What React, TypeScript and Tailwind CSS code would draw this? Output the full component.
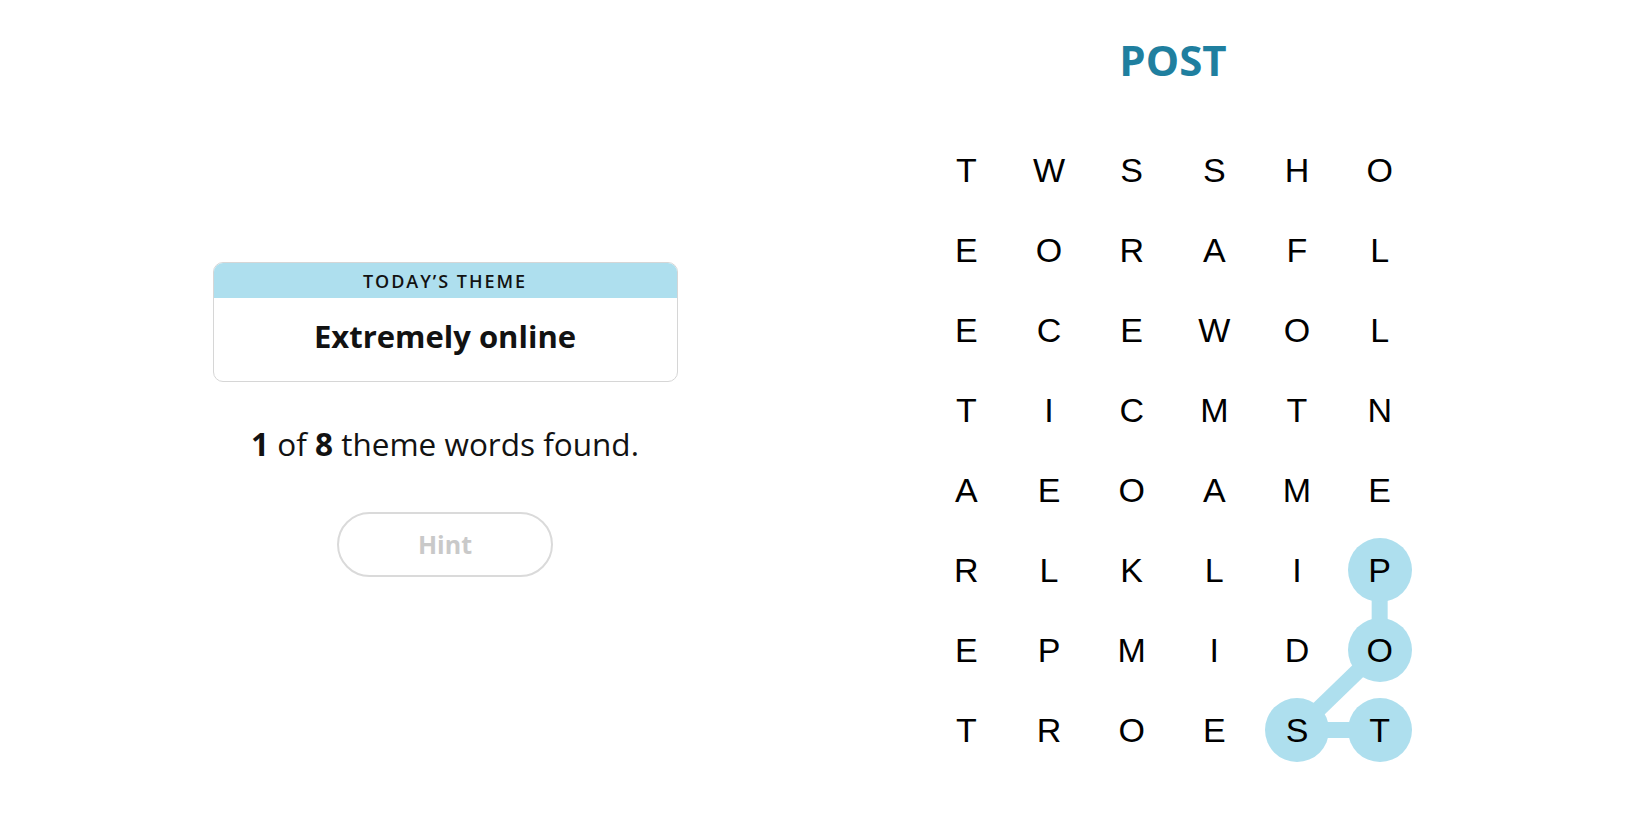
import React from 'react';

const rows = ['TWSSHO', 'EORAFL', 'ECEWOL', 'TICMTN', 'AEOAME', 'RLKLIP', 'EPMIDO', 'TROEST'];

const CELL_W = 496 / 6;
const CELL_H = 80;

// letters of the word being traced, as [col, row]
const path: [number, number][] = [
  [5, 5],
  [5, 6],
  [4, 7],
  [5, 7],
];

const isSelected = (c: number, r: number) => path.some(([pc, pr]) => pc === c && pr === r);

function ThemeCard() {
  return (
    <div className="w-[465px] rounded-[10px] border border-[#d6d6d6] overflow-hidden bg-white">
      <div className="h-[35px] bg-[#aedfee] flex items-center justify-center">
        <span className="text-[18px] font-semibold tracking-[0.11em] text-[#121212] leading-none">TODAY’S THEME</span>
      </div>
      <div className="h-[83px] pb-[6px] flex items-center justify-center">
        <span className="text-[31px] font-bold text-[#121212] leading-none">Extremely online</span>
      </div>
    </div>
  );
}

function Board() {
  return (
    <div className="relative w-[496px] h-[640px]">
      <svg className="absolute inset-0" width={496} height={640}>
        {path.slice(1).map(([c, r], i) => {
          const [pc, pr] = path[i];
          return (
            <line
              key={i}
              x1={pc * CELL_W + CELL_W / 2}
              y1={pr * CELL_H + CELL_H / 2}
              x2={c * CELL_W + CELL_W / 2}
              y2={r * CELL_H + CELL_H / 2}
              stroke="#aedfee"
              strokeWidth={16}
            />
          );
        })}
      </svg>
      <div className="relative grid grid-cols-6">
        {rows.map((row, r) =>
          row.split('').map((ch, c) => (
            <div key={`${r}-${c}`} className="h-[80px] flex items-center justify-center">
              <div
                className={`w-16 h-16 rounded-full flex items-center justify-center text-[34px] text-black leading-none ${
                  isSelected(c, r) ? 'bg-[#aedfee]' : ''
                }`}
                style={{ fontFamily: '"Liberation Sans", Arial, sans-serif' }}
              >
                {ch}
              </div>
            </div>
          ))
        )}
      </div>
    </div>
  );
}

export default function App() {
  return (
    <div className="w-[1650px] h-[825px] bg-white flex" style={{ fontFamily: '"Open Sans", "Noto Sans", sans-serif' }}>
      {/* left side: theme + progress */}
      <div className="w-[890px] flex flex-col items-center pt-[262px]">
        <ThemeCard />
        <p className="mt-[46px] text-[31.5px] text-[#121212] leading-none">
          <span className="font-bold">1</span> of <span className="font-bold">8</span> theme words found.
        </p>
        <button className="mt-[52px] w-[216px] h-[65px] rounded-full border-2 border-[#dadada] text-[25px] font-bold text-[#c9c9c9] leading-none">
          Hint
        </button>
      </div>

      {/* right side: current word + board */}
      <div className="w-[566px] flex flex-col items-center">
        <h1 className="mt-[39px] h-[42px] text-[42px] font-bold text-[#1f7f9f] leading-none">POST</h1>
        <div className="mt-[49px]">
          <Board />
        </div>
      </div>
    </div>
  );
}
